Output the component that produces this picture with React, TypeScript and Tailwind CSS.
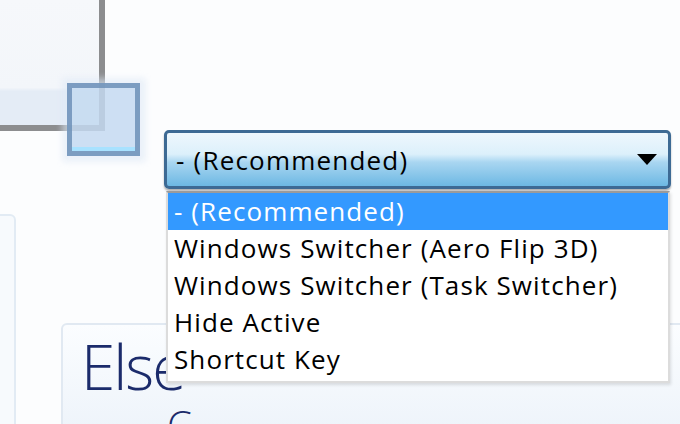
export default function App() {
  const options = [
    "- (Recommended)",
    "Windows Switcher (Aero Flip 3D)",
    "Windows Switcher (Task Switcher)",
    "Hide Active",
    "Shortcut Key",
  ];

  return (
    <div className="relative w-[680px] h-[424px] overflow-hidden bg-[#fcfdfe] font-['Open_Sans','Noto_Sans',sans-serif] text-black">
      {/* top-left window preview */}
      <div className="absolute left-0 top-0 w-[105px] h-[131px] border-r-[6px] border-b-[6px] border-[#8c8d8f] bg-[linear-gradient(to_bottom,#f6f8fb_0%,#f3f6fa_70%,#e4ecf6_73%,#e4ecf6_100%)] blur-[0.6px]" />

      {/* blue selection square */}
      <div className="absolute left-[62px] top-[78px] w-[84px] h-[84px] rounded-[4px] bg-[#dfeaf6]/60 blur-[3px]" />
      <div className="absolute left-[67px] top-[83px] w-[73px] h-[73px] border-[5px] border-[#6f90b9]/85 bg-[#b9d3ee]/60 blur-[0.4px]">
        <div className="absolute left-0 right-0 bottom-0 h-[4px] bg-[#a8e2ff]" />
      </div>

      {/* left faint panel */}
      <div className="absolute left-[-20px] top-[214px] w-[36px] h-[230px] rounded-[6px] border-2 border-[#e2ebf4] bg-[#f7fafd]" />

      {/* lower panel */}
      <div className="absolute left-[61px] top-[323px] w-[700px] h-[140px] rounded-tl-[6px] border-2 border-[#e1e9f2] bg-[linear-gradient(to_bottom,#fbfdff,#eaf1f9)] flex flex-col">
        <div className="pl-[18px] pt-[8px] text-[62px] leading-[66px] font-light tracking-[-2px] text-[#1b2b6b]">
          Else
        </div>
        <div className="pl-[104px] pt-[6px] text-[40px] leading-[40px] font-light text-[#1b2b6b]">C</div>
      </div>

      {/* combobox */}
      <div className="absolute left-[164px] top-[130px] w-[507px] h-[59px] rounded-[5px] border-[3px] border-[#3d6a94] bg-[linear-gradient(to_bottom,#eef7fd_0%,#dcf0fb_40%,#a9d6f1_55%,#6db8e3_100%)] flex items-center pl-[9px] pr-[11px] shadow-[0_2px_2px_rgba(0,0,0,0.3)]">
        <span className="flex-1 text-[26px] leading-none tracking-[1.2px]">- (Recommended)</span>
        <svg width="20" height="12" viewBox="0 0 20 12">
          <polygon points="0,0 20,0 10,11" fill="#000" />
        </svg>
      </div>

      {/* dropdown list */}
      <div className="absolute left-[166px] top-[191px] w-[504px] h-[192px] flex flex-col bg-white border-[2px] border-[#dcdcdc] border-t-[#9a9a9a] shadow-[1px_2px_3px_rgba(0,0,0,0.12)]">
        {options.map((o, i) => (
          <div
            key={o}
            className={
              i === 0
                ? "h-[37px] bg-[#3399ff] text-white pl-[6px] text-[26px] leading-[37px] tracking-[1.1px]"
                : "h-[37px] pl-[6px] text-[26px] leading-[37px] tracking-[1.1px]"
            }
          >
            {o}
          </div>
        ))}
      </div>
    </div>
  );
}
